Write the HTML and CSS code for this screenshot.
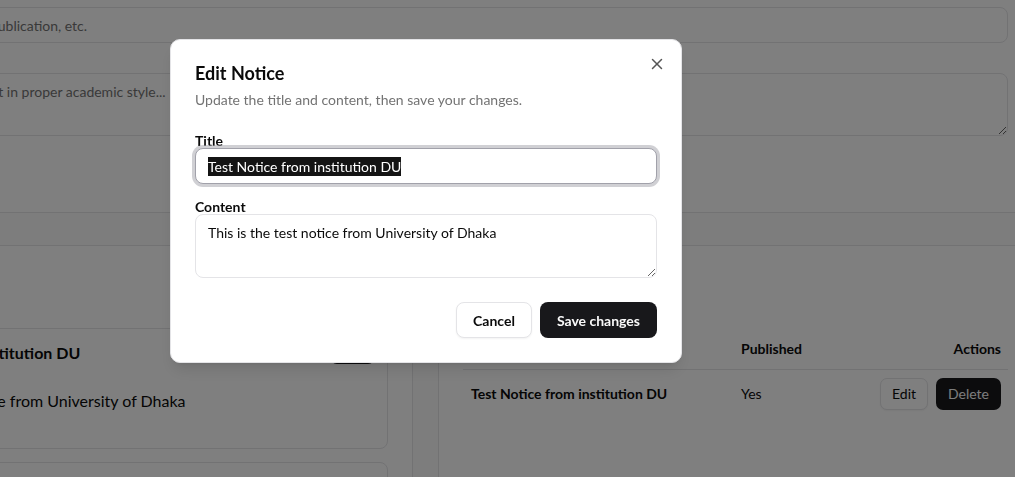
FILE: index.html
```html
<!DOCTYPE html>
<html lang="en">
<head>
<meta charset="utf-8">
<title>Edit Notice</title>
<link rel="stylesheet" href="styles.css">
</head>
<body>
<div class="page">
  <section class="card form-card">
    <div class="field">
      <label class="label">Category</label>
      <input class="input" placeholder="e.g. Admission, exam, publication, etc.">
    </div>
    <div class="field">
      <label class="label">Content</label>
      <textarea class="textarea bg-textarea" placeholder="Write the notice content in proper academic style..."></textarea>
    </div>
    <div class="form-actions"><button class="btn btn-dark">Publish Notice</button></div>
  </section>

  <div class="columns">
    <section class="card list-card">
      <header class="card-head"><h2>My Notices</h2></header>
      <div class="notice-list">
        <article class="notice">
          <div class="notice-top">
            <h3>Test Notice from institution DU</h3>
            <span class="badge">Live</span>
          </div>
          <p>This is the test notice from University of Dhaka</p>
        </article>
        <article class="notice notice-next">
          <div class="notice-top">
            <h3>Admission Notice</h3>
          </div>
          <p>Admission test schedule for the new session</p>
        </article>
      </div>
    </section>

    <section class="card table-card">
      <header class="card-head"><h2>All Notices</h2></header>
      <table class="table">
        <colgroup><col class="c1"><col class="c2"><col></colgroup>
        <thead>
          <tr><th>Title</th><th>Published</th><th class="right">Actions</th></tr>
        </thead>
        <tbody>
          <tr>
            <td class="strong">Test Notice from institution DU</td>
            <td>Yes</td>
            <td class="right">
              <div class="row-actions">
                <button class="btn btn-outline btn-sm">Edit</button>
                <button class="btn btn-dark btn-sm">Delete</button>
              </div>
            </td>
          </tr>
        </tbody>
      </table>
    </section>
  </div>
</div>

<div class="overlay"></div>

<div class="dialog" role="dialog">
  <button class="close" aria-label="Close">
    <svg width="18" height="18" viewBox="0 0 24 24" fill="none" stroke="currentColor" stroke-width="2" stroke-linecap="round" stroke-linejoin="round"><path d="M18 6 6 18"/><path d="m6 6 12 12"/></svg>
  </button>
  <h2 class="dialog-title">Edit Notice</h2>
  <p class="dialog-desc">Update the title and content, then save your changes.</p>
  <div class="dialog-form">
    <div class="field">
      <label class="label">Title</label>
      <div class="input focused"><span class="sel">Test Notice from institution DU</span></div>
    </div>
    <div class="field">
      <label class="label">Content</label>
      <textarea class="textarea dialog-textarea">This is the test notice from University of Dhaka</textarea>
    </div>
  </div>
  <div class="dialog-footer">
    <button class="btn btn-outline">Cancel</button>
    <button class="btn btn-dark">Save changes</button>
  </div>
</div>
</body>
</html>
```

FILE: styles.css
```css
* { box-sizing: border-box; }

html, body {
  margin: 0;
  padding: 0;
  overflow: hidden;
}

body {
  font-family: Lato, "Noto Sans", sans-serif;
  color: #0a0a0a;
  background: #fafafa;
  width: 1015px;
  height: 477px;
}

.page {
  margin: -40px 0 0 -182px;
  width: 1215px;
  display: flex;
  flex-direction: column;
  gap: 32px;
}

.card {
  background: #fff;
  border: 1px solid #e4e4e7;
  border-radius: 10px;
  padding: 24px;
}

.form-card {
  display: flex;
  flex-direction: column;
  gap: 16px;
  padding-bottom: 24px;
}

.field {
  display: flex;
  flex-direction: column;
  gap: 0;
}

.form-card .field { gap: 8px; }
.form-card .field + .field { margin-top: -8px; }

.label {
  font-size: 14px;
  line-height: 14px;
  font-weight: 700;
}

.input {
  height: 36px;
  border: 1px solid #e4e4e7;
  border-radius: 8px;
  padding: 0 12px;
  font: inherit;
  font-size: 14px;
  color: #0a0a0a;
  background: #fff;
  outline: none;
  display: flex;
  align-items: center;
}

.input::placeholder,
.textarea::placeholder { color: #737373; }

.textarea {
  display: block;
  border: 1px solid #e4e4e7;
  border-radius: 8px;
  padding: 8px 12px;
  font: inherit;
  font-size: 14px;
  line-height: 20px;
  color: #0a0a0a;
  background: #fff;
  outline: none;
}

.bg-textarea { height: 63px; padding-left: 8px; }

.form-actions { display: flex; }

.btn {
  height: 36px;
  padding: 0 16px;
  border-radius: 8px;
  font: inherit;
  font-size: 14px;
  font-weight: 700;
  border: 1px solid transparent;
  cursor: pointer;
}

.btn-dark { background: #18181b; color: #fafafa; }
.btn-outline {
  background: #fff;
  color: #0a0a0a;
  border-color: #e4e4e7;
  box-shadow: 0 1px 2px rgba(0,0,0,.05);
}

.btn-sm { height: 32px; padding: 0 11px; border-radius: 7px; font-weight: 400; }

.columns {
  display: grid;
  grid-template-columns: 1fr 1fr;
  gap: 25px;
}

.card-head h2 {
  margin: 0 0 30px;
  font-size: 20px;
  line-height: 28px;
  font-weight: 700;
}

.table-card .card-head h2 { margin-bottom: 31px; }

.notice-list {
  display: flex;
  flex-direction: column;
  gap: 13px;
}

.notice {
  border: 1px solid #e4e4e7;
  border-radius: 8px;
  padding: 12px 12px 35px;
}

.notice-next { padding-top: 20px; }

.notice-top {
  display: flex;
  justify-content: space-between;
  align-items: center;
}

.notice h3 {
  margin: 0;
  font-size: 16px;
  line-height: 24px;
  font-weight: 700;
}

.badge {
  background: #18181b;
  color: #fff;
  font-size: 12px;
  line-height: 22px;
  height: 22px;
  width: 45px;
  text-align: center;
  border-radius: 7px;
  font-weight: 700;
}

.notice p {
  margin: 24px 0 0;
  font-size: 16px;
  line-height: 24px;
}

.table {
  width: 100%;
  border-collapse: collapse;
  table-layout: fixed;
  font-size: 14px;
}

.table .c1 { width: 270px; }
.table .c2 { width: 130px; }

.table th {
  height: 40px;
  padding: 0 8px;
  text-align: left;
  font-weight: 700;
  border-bottom: 1px solid #e4e4e7;
}

.table th.right { padding-right: 7px; }

.table td {
  padding: 8px;
  line-height: 20px;
}

.table .right { text-align: right; }
.table .strong { font-weight: 700; }

.row-actions {
  display: flex;
  justify-content: flex-end;
  gap: 8px;
  margin-right: -1px;
}

.overlay {
  position: fixed;
  inset: 0;
  background: rgba(0,0,0,.5);
}

.dialog {
  position: fixed;
  left: 170px;
  top: 39px;
  width: 512px;
  background: #fff;
  border: 1px solid #e4e4e7;
  border-radius: 10px;
  padding: 24px;
  box-shadow: 0 10px 15px -3px rgba(0,0,0,.1), 0 4px 6px -4px rgba(0,0,0,.1);
}

.close {
  position: absolute;
  top: 15px;
  right: 15px;
  width: 18px;
  height: 18px;
  padding: 0;
  border: 0;
  background: none;
  color: #555;
  display: flex;
}

.dialog-title {
  margin: 0;
  font-size: 18px;
  line-height: 18px;
  font-weight: 700;
}

.dialog-desc {
  margin: 8px 0 0;
  font-size: 14px;
  line-height: 20px;
  color: #737373;
}

.dialog-form {
  margin-top: 24px;
  display: flex;
  flex-direction: column;
  gap: 16px;
}

.focused {
  border-color: #a1a1aa;
  box-shadow: 0 0 0 3px rgba(161,161,170,.5);
}

.sel {
  background: #141414;
  color: #fff;
  padding: 1px 0;
}

.dialog-textarea {
  height: 64px;
  resize: vertical;
  width: 100%;
}

.dialog-footer {
  margin-top: 24px;
  display: flex;
  justify-content: flex-end;
  gap: 8px;
}
```
